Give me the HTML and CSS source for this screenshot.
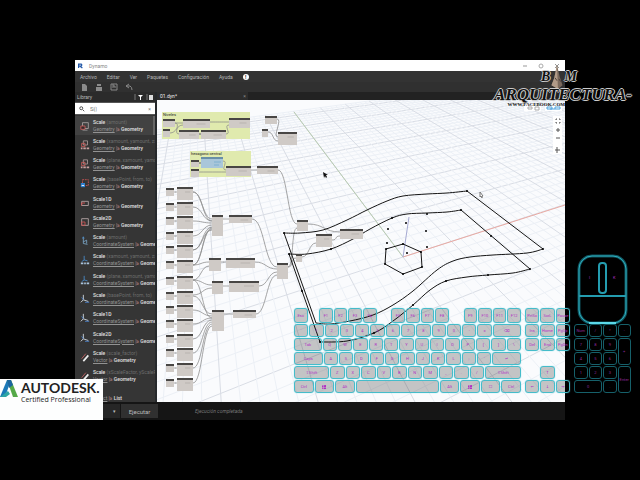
FILE: index.html
```html
<!DOCTYPE html>
<html lang="es">
<head>
<meta charset="utf-8">
<title>Dynamo</title>
<link rel="stylesheet" href="styles.css">
</head>
<body>
<svg class="defs" aria-hidden="true">
  <symbol id="i-box" viewBox="0 0 12 12"><path d="M3 2h7v7H3z" fill="none" stroke="#a9a3a3"/><path d="M1 6h5v4H1z" fill="#352c2c" stroke="#cf5f5b"/><path d="M3 11h6" stroke="#999"/></symbol>
  <symbol id="i-xyz" viewBox="0 0 12 12"><path d="M4 1h5v5H4z" fill="none" stroke="#a99"/><path d="M2 4h4v4H2z" fill="none" stroke="#cf5f5b"/><path d="M1 10h2M4 10h3M8 10h3" stroke="#c8a0a0" stroke-width="2"/></symbol>
  <symbol id="i-base" viewBox="0 0 12 12"><path d="M3 2h7v7H3z" fill="none" stroke="#c55" stroke-dasharray="2 1"/><path d="M1 6h5v5H1z" fill="#2f7fce"/><path d="M2 9h3" stroke="#fff"/></symbol>
  <symbol id="i-1d" viewBox="0 0 12 12"><path d="M2 4h8v5H2z" fill="none" stroke="#b9aaaa"/><path d="M2 9V6h4" fill="none" stroke="#d55"/></symbol>
  <symbol id="i-2d" viewBox="0 0 12 12"><path d="M2 2h8v8H2z" fill="none" stroke="#b9aaaa"/><path d="M2 10V6h4v4z" fill="none" stroke="#c55"/></symbol>
  <symbol id="i-cs" viewBox="0 0 12 12"><path d="M4 1v8l5 1M4 7l4-2v4" fill="none" stroke="#7ba7c9"/><path d="M3 3l1-2 1 2" fill="none" stroke="#4a8dcc"/></symbol>
  <symbol id="i-csx" viewBox="0 0 12 12"><path d="M5 1v5l4 1M5 6L2 8" fill="none" stroke="#4a8dcc"/><path d="M1 10h3M5 10h2M8 10h3" stroke="#a9c3dc" stroke-width="2"/></symbol>
  <symbol id="i-csb" viewBox="0 0 12 12"><path d="M4 1v6l6 2M4 7l-3 3" fill="none" stroke="#dfe5ea"/><path d="M2 4l2 3M6 10h5" stroke="#4a83d0"/></symbol>
  <symbol id="i-vec" viewBox="0 0 12 12"><path d="M2 8l5-6" stroke="#c66"/><path d="M4 11l6-7" stroke="#eee" stroke-width="2"/></symbol>
  <symbol id="i-win" viewBox="0 0 8 8"><path d="M0 1l3-.5V4H0zM4 .4L8 0v4H4zM0 5h3v3L0 7.500zM4 5h4v3H4z" fill="#b22fc4"/></symbol>
</svg>

<main class="app">
  <header class="title">
    <svg viewBox="0 0 8 8"><path d="M1 7V1h4q2 1 0 3H3l4 3" fill="none" stroke="#2459a8" stroke-width="2"/></svg>
    <span>Dynamo</span>
    <svg class="winctl" viewBox="0 0 40 8"><path d="M1 4h4M33 2l4 4M37 2l-4 4" stroke="#999"/><circle cx="19" cy="4" r="2" fill="none" stroke="#aaa"/></svg>
  </header>
  <nav class="menu">
    <a href="#">Archivo</a><a href="#">Editar</a><a href="#">Ver</a><a href="#">Paquetes</a><a href="#">Configuración</a><a href="#">Ayuda</a><b class="alert">!</b>
  </nav>
  <div class="tools">
    <button aria-label="Nuevo"><svg viewBox="0 0 8 8"><path d="M2 1h3l2 2v5H2z" fill="#8b8b8b"/></svg></button>
    <button aria-label="Abrir"><svg viewBox="0 0 8 8"><path d="M1 4h6v4H1zM2 1h4v2H2z" fill="#8b8b8b"/></svg></button>
    <button aria-label="Guardar"><svg viewBox="0 0 8 8"><path d="M1 1h6v6H1zM2 4h4M3 1v2h2" fill="none" stroke="#888"/></svg></button>
    <button aria-label="Deshacer"><svg viewBox="0 0 8 8"><path d="M4 1L1 3l3 2M1 3h4q2 1 2 4" fill="none" stroke="#888"/></svg></button>
  </div>
  <div class="work">
    <aside class="library">
      <div class="lib-head"><span>Library</span><svg viewBox="0 0 20 8"><path d="M2 1v6M14 1v6" stroke="#777"/><path d="M5 2h5L8 4v3H7V4z" fill="#fff"/><path d="M16 2h4v5h-4z" fill="#ddd"/></svg></div>
      <label class="search">
        <svg viewBox="0 0 8 8"><circle cx="3" cy="3" r="2" fill="none" stroke="#222"/><path d="M5 5l2 2" stroke="#222"/></svg>
        <input type="text" value="S(|" aria-label="Buscar"><i>×</i>
      </label>
      <div class="results"><ul id="results"></ul></div>
    </aside>
    <section class="workspace">
      <div class="tabs"><span class="tab">01.dyn*<i>×</i></span></div>
      <svg class="canvas" id="canvas" viewBox="157 100 408 302" preserveAspectRatio="xMinYMin slice"></svg>
    </section>
  </div>
  <footer class="status"><button class="mode" aria-label="Modo">▾</button><button class="run">Ejecutar</button><em>Ejecución completada</em></footer>
</main>

<div class="badge">
  <svg viewBox="0 0 18 20"><path d="M0 18L7 1h4L5 18z" fill="#1b79b8"/><path d="M7 1h4l7 17h-5z" fill="#55a948"/><path d="M7 1h4l2 5-4 3z" fill="#1c659f"/><path d="M0 18l8-6 2 3-4 3z" fill="#2ea5a4"/></svg>
  <div><strong>AUTODESK.</strong><span>Certified Professional</span></div>
</div>

<div class="brand">
  <div class="initials"><span>B</span><svg viewBox="0 0 14 26"><path d="M7 0l3 13 3 9-5 4-7-4 3-8z" fill="#79685c"/><path d="M7 0l1 26-7-4 3-8z" fill="#b09a88"/><path d="M5 14l2 3M9 15l2 3" stroke="#493c35"/></svg><span>M</span></div>
  <div class="name">ARQUITECTURA-</div>
  <small>WWW.FACEBOOK.COM</small>
</div>

<div class="keyboard">
  <div class="block main" id="keys-main"></div>
  <div class="block nav" id="keys-nav"></div>
  <div class="block pad" id="keys-pad"></div>
</div>
<svg class="mouse" viewBox="0 0 52 72"><rect x="2" y="2" width="47" height="67" rx="13" fill="none" stroke="#0f5560" stroke-width="3"/><rect x="2" y="2" width="47" height="67" rx="13" fill="none" stroke="#2fb0c0"/><path d="M2 42h47" stroke="#249caf" stroke-width="2"/><rect x="22" y="9" width="7" height="30" rx="3" fill="#000" stroke="#249caf" stroke-width="2"/><path d="M12 69h27" stroke="#5bd8e8" stroke-width="2"/><text x="12" y="25">I</text><text x="36" y="25">K</text></svg>
<script src="main.js"></script>
</body>
</html>
```
FILE: styles.css
```css
* { box-sizing: border-box; }
body { margin: 0; min-height: 100vh; padding: 60px 75px; background: #000; display: flex; position: relative; overflow: hidden; font-family: Roboto, "Noto Sans", sans-serif; font-size: 5px; }
button { font: inherit; color: inherit; background: none; border: 0; padding: 0; }
a { color: inherit; text-decoration: none; }
ul { list-style: none; margin: 0; padding: 0; }
i { font-style: normal; }
.defs { position: absolute; width: 0; height: 0; }
.app { flex: 1; min-width: 0; display: flex; flex-direction: column; background: #333; color: #b8b8b8; }
.title { height: 11px; background: #fff; color: #888; display: flex; align-items: center; gap: 6px; padding: 0 3px; }
.title svg { width: 5px; height: 6px; }
.title .winctl { width: 40px; height: 8px; margin-left: auto; }
.menu { height: 11px; display: flex; align-items: center; gap: 10px; padding-left: 5px; background: #333; }
.alert { width: 6px; height: 6px; border-radius: 50%; background: #fff; color: #222; text-align: center; line-height: 6px; }
.tools { height: 10px; display: flex; align-items: center; gap: 7px; padding-left: 5px; background: #303030; }
.tools button { width: 8px; height: 8px; display: flex; }
.tools svg { width: 8px; height: 8px; }
.work { flex: 1; min-height: 0; display: flex; }
.library { width: 82px; display: flex; flex-direction: column; border-right: 2px solid #25282b; background: #353535; }
.lib-head { height: 10px; display: flex; align-items: center; justify-content: space-between; padding: 0 2px; background: #2b2b2b; }
.lib-head svg { width: 20px; height: 8px; }
.search { height: 13px; display: flex; align-items: center; padding: 0 4px; gap: 5px; background: #fff; border: 1px solid #555; border-width: 1px 0; color: #777; }
.search svg { width: 6px; height: 6px; }
.search input { flex: 1; min-width: 0; border: 0; padding: 0; outline: 0; height: 9px; font: inherit; font-size: 6px; color: #777; text-decoration: underline; }
.results { flex: 1; min-height: 0; overflow: hidden; padding-top: 1px; }
.results ul { height: calc(100% + 3px); display: grid; grid-auto-rows: 1fr; }
.results li { display: flex; align-items: center; gap: 3px; padding-left: 5px; min-width: 0; min-height: 0; white-space: nowrap; }
.results li:first-child { background: #424242; border-right: 2px solid #666; }
.results li svg { width: 10px; height: 10px; flex: none; }
.results p { margin: 0; line-height: 7px; color: #e0e0e0; font-weight: 500; }
.results p span { color: #6c6c6c; font-weight: 400; }
.results p u { color: #929292; font-weight: 400; }
.results p i { color: #b88; }
.workspace { flex: 1; min-width: 0; display: flex; flex-direction: column; background: #fafbfd; }
.tabs { height: 8px; background: #222; display: flex; }
.tab { width: 91px; display: flex; justify-content: space-between; align-items: center; padding: 0 2px 0 3px; background: #2d2d2d; color: #eee; }
.tab i { color: #888; }
.canvas { width: 100%; flex: 1; min-height: 0; display: block; }
.canvas text { font: 4px Roboto, sans-serif; fill: #222; }
.grid { fill: none; stroke: #ecf0f6; stroke-width: 1; }
.grid.major { stroke: #d9dde5; }
.wire { fill: none; stroke: #888; stroke-width: 1; opacity: .75; }
.curve { fill: none; stroke: #151515; stroke-width: 1; }
.node { fill: #cfcac6; }
.head { fill: #484644; }
.line { fill: none; stroke: #b8b3af; stroke-width: 1; }
.status { height: 18px; display: flex; align-items: center; background: #151515; color: #bbb; }
.status .mode { width: 45px; height: 14px; text-align: right; padding-right: 4px; background: #262626; }
.status .run { width: 37px; height: 14px; background: #303030; margin-left: 1px; font-size: 6px; color: #bbb; }
.status em { margin-left: 37px; color: #777; }
.badge { position: absolute; left: 0; top: 379px; width: 103px; height: 41px; background: #fdfefe; color: #222; display: flex; align-items: flex-start; gap: 3px; }
.badge > svg { width: 18px; height: 20px; }
.badge div { display: flex; flex-direction: column; padding-top: 2px; }
.badge strong { font: 700 14px/14px Lato, sans-serif; }
.badge span { font: 7px/10px "Open Sans", sans-serif; }
.brand { position: absolute; right: 3px; top: 66px; width: 148px; text-align: center; color: #111; font-family: "Liberation Serif", serif; font-style: italic; font-weight: 700; }
.initials, .name { text-shadow: 1px 0 #ccc, -1px 0 #ccc, 0 1px #ccc, 0 -1px #ccc; }
.initials { height: 22px; display: flex; justify-content: center; align-items: center; font-size: 14px; padding-right: 8px; }
.initials svg { width: 14px; height: 24px; }
.name { font-size: 17px; line-height: 14px; white-space: nowrap; }
.brand small { display: block; width: 76px; text-align: right; font-size: 5px; line-height: 6px; font-style: normal; }
.keyboard { position: absolute; left: 294px; top: 308px; display: flex; gap: 4px; color: #b22fc4; font-size: 4px; }
.block { display: grid; gap: 1px; grid-template-rows: 15px repeat(5, 13px); height: 86px; }
.main { width: 227px; }
.row { display: flex; gap: 1px; min-width: 0; }
.nav { width: 45px; grid-template-columns: repeat(3, 1fr); }
.pad { width: 57px; grid-template-columns: repeat(4, 1fr); }
.key { min-width: 0; min-height: 0; border: 1px solid #45bcca; border-radius: 3px; background: rgba(0, 0, 0, .22); box-shadow: 0 0 1px #52d5e2; display: flex; align-items: center; justify-content: center; line-height: 5px; font-family: Roboto, "DejaVu Sans", sans-serif; }
.key svg { width: 4px; height: 4px; }
.pad .key { border-color: #16606a; box-shadow: none; color: #8f2a9c; }
.gap { visibility: hidden; }
.mouse { position: absolute; left: 577px; top: 254px; width: 52px; height: 72px; }
.mouse text { font: 4px Roboto, sans-serif; fill: #b22fc4; }
```
FILE: main.js
```js
// Search results: icon, name, parameters, source type, result type
const results = [
  ['box', 'Scale', '(amount)', 'Geometry', 'Geometry'],
  ['xyz', 'Scale', '(xamount, yamount, zam', 'Geometry', 'Geometry'],
  ['xyz', 'Scale', '(plane, xamount, yamou', 'Geometry', 'Geometry'],
  ['base', 'Scale', '(basePoint, from, to)', 'Geometry', 'Geometry'],
  ['1d', 'Scale1D', '', 'Geometry', 'Geometry'],
  ['2d', 'Scale2D', '', 'Geometry', 'Geometry'],
  ['cs', 'Scale', '(amount)', 'CoordinateSystem', 'Geome'],
  ['csx', 'Scale', '(xamount, yamount, zam', 'CoordinateSystem', 'Geome'],
  ['csx', 'Scale', '(plane, xamount, yamou', 'CoordinateSystem', 'Geome'],
  ['csb', 'Scale', '(basePoint, from, to)', 'CoordinateSystem', 'Geome'],
  ['csb', 'Scale1D', '', 'CoordinateSystem', 'Geome'],
  ['csb', 'Scale2D', '', 'CoordinateSystem', 'Geome'],
  ['vec', 'Scale', '(scale_factor)', 'Vector', 'Geometry'],
  ['vec', 'Scale', '(xScaleFactor, yScaleFac', 'Vector', 'Geometry'],
  ['vec', 'List', '', 'Object', 'List']
];
document.getElementById('results').innerHTML = results.map(([icon, name, args, from, to]) =>
  `<li><svg><use href="#i-${icon}"/></svg><div><p>${name} <span>${args}</span></p><p><u>${from}</u> <i>|≥</i> ${to}</p></div></li>`).join('');

// Ground grid in perspective
const origin = [403, 257], vpU = [1255, -20], vpV = [195, -20];
const stepU = 0.012, stepV = 0.03, far = 37;
function ground(u, v) {
  const a = u * stepU, b = v * stepV, d = 1 + a + b;
  return [0, 1].map(k => ((origin[k] + a * vpU[k] + b * vpV[k]) / d).toFixed(1)).join(' ');
}
let art = '';
for (let v = -24; v <= far; v++) {
  const u0 = (-0.75 - v * stepV) / stepU;
  art += `<path class="grid${v % 5 ? '' : ' major'}" d="M${ground(u0, v)}L${ground(140, v)}"/>`;
}
for (let u = -110; u <= 110; u++) {
  const v0 = (-0.75 - u * stepU) / stepV;
  if (v0 < far) art += `<path class="grid${u % 5 ? '' : ' major'}" d="M${ground(u, v0)}L${ground(u, far)}"/>`;
}
art += '<path d="M403 257L565 205" stroke="#e9a9a2"/><path d="M403 257L294 112" stroke="#b8cbb0"/><path d="M403 257L409 217" stroke="#a5a9d2"/>';
art += '<path d="M162 112h88v27h-88zM190 151h61v26h-61z" fill="#e0eaae"/><text x="163" y="116">Niveles</text><text x="191" y="155">hexagono central</text>';

// Wires between nodes
function wire(x1, y1, x2, y2) {
  const m = Math.max(6, (x2 - x1) / 2);
  art += `<path class="wire" d="M${x1} ${y1}C${x1 + m} ${y1} ${x2 - m} ${y2} ${x2} ${y2}"/>`;
}
const rows = [187, 202, 216, 231, 245, 260, 276, 291, 305, 319, 334, 348, 363, 378];
rows.forEach((y, i) => {
  wire(173, y + 5, 178, y + 5);
  if (i < 6) wire(193, y + 5, 212, 219 + i * 2);
  if (i > 6) wire(193, y + 5, 212, 314 + (i - 7) * 2);
});
[[193,192,212,221],[193,250,212,230],[193,265,209,262],[193,280,209,266],[193,265,212,228],[193,280,212,285],[193,295,212,288],[193,280,212,318],
 [223,219,229,219],[221,262,226,262],[223,286,229,286],[224,314,233,314],[252,219,277,267],[255,262,277,269],[259,286,277,272],[256,314,277,275],
 [175,123,183,123],[170,133,183,125],[175,123,179,134],[199,134,201,134],[210,122,229,122],[226,134,229,125],
 [199,163,201,163],[199,172,226,172],[223,161,226,170],[251,170,257,170],[278,170,297,224],[277,119,278,137],[268,132,278,141],
 [288,267,297,228],[288,267,296,258],[308,224,340,232],[302,257,316,243],[332,240,340,236]].forEach(w => wire(...w));

// Nodes: x, y, width, height
const nodes = [[163,119,12,8],[163,129,7,8],[183,119,27,9],[179,130,20,9],[201,130,25,9],[229,118,21,10],[191,160,8,7],[191,169,8,8],
 [226,166,25,10],[257,166,21,8],[265,116,12,8],[262,129,6,8],[278,132,19,13],[212,215,11,21],[209,258,12,13],[212,281,11,13],[212,310,12,21],
 [229,215,23,8],[226,258,29,10],[229,281,30,11],[233,310,23,8],[277,263,11,16],[297,220,11,11],[316,234,16,13],[340,229,23,10],[296,254,6,8]];
rows.forEach(y => nodes.push([166, y + 1, 8, 8], [177, y, 16, 13]));

// Smooth curve through a list of points
function spline(p) {
  let d = `M${p[0]}`;
  for (let i = 0; i < p.length - 1; i++) {
    const a = p[i - 1] || p[i], b = p[i], c = p[i + 1], e = p[i + 2] || c;
    d += `C${b[0] + (c[0] - a[0]) / 6} ${b[1] + (c[1] - a[1]) / 6} ${c[0] - (e[0] - b[0]) / 6} ${c[1] - (e[1] - b[1]) / 6} ${c}`;
  }
  art += `<path class="curve" d="${d}"/>`;
}
spline([[284,233],[300,233],[323,230],[347,220],[367,210],[387,201],[403,196],[427,194],[447,193],[467,191]]);
spline([[543,249],[527,253],[493,255],[470,257],[453,261],[437,270],[413,291],[393,305],[373,315],[350,321],[330,324],[316,323]]);
spline([[289,254],[307,254],[331,249],[353,239],[370,229],[392,218],[407,214],[427,213],[447,212],[461,210]]);
spline([[530,269],[513,273],[488,275],[467,277],[446,281],[430,290],[413,305],[393,321],[374,333],[347,341],[320,342]]);
art += '<path class="curve" d="M467 191L543 249M461 210L530 269M284 233L316 323M289 254L320 342M403 244L421 252L422 267L403 274L385 264L386 249Z"/>';
nodes.forEach(([x, y, w, h]) => {
  art += `<rect class="node" x="${x}" y="${y}" width="${w}" height="${h}"/><rect class="head" x="${x}" y="${y}" width="${w}" height="2"/>`;
  if (w > 12) art += `<path class="line" d="M${x + w / 2} ${y + 5}h${w / 3}"/>`;
});
art += '<rect x="201" y="157" width="22" height="11" fill="#a9c6da"/><rect x="201" y="157" width="22" height="2" fill="#6a8fa8"/><path d="M214 162h7M214 165h5" stroke="#7fb0d0"/>';
[[284,233],[289,254],[302,291],[320,342],[331,249],[392,218],[427,214],[461,210],[467,191],[491,236],[543,249],[530,269],[488,275],[446,281],[413,305],[374,333],
 [403,244],[421,252],[422,267],[403,274],[385,264],[386,249],[406,223],[388,229],[426,231],[387,243],[427,247],[407,253]].forEach(([x, y]) => {
  art += `<circle cx="${x}" cy="${y}" r="1"/>`;
});
art += '<path d="M323 172l1 6 1-2 1 2 1-1-1-2h2z" fill="#111"/><path d="M480 192v5l1-1 1 2v-2h1z" fill="#fff" stroke="#777"/>';
art += '<path d="M553 116h9v31h-9zM553 146h9v8h-9z" fill="#fff"/><path d="M556 120v-1h1M559 119h1v1M560 122v1h-1M557 123h-1v-1M556 130h4M558 128v4M556 138h4M555 150h5M557 147v6" fill="none" stroke="#555"/><path d="M524 105h17v6h-17zM545 105h17v6h-17z" fill="#fff"/><path d="M528 107h4v2h-4zM535 107h4v3h-4z" fill="none" stroke="#aaa"/><path d="M547 107h5v2h-5zM555 107h5v2h-5zM550 109h5" fill="none" stroke="#4ba0dc"/>';
document.getElementById('canvas').innerHTML = art;

// Keyboard: "label:width" in pixels, "_" is an empty space
const key = (label, style = '') => {
  const face = label === 'WIN' ? '<svg><use href="#i-win"/></svg>' : label;
  return `<kbd class="key${label === '_' ? ' gap' : ''}" style="${style}">${face}</kbd>`;
};
const board = [
  'Esc:14 _:9 F1:14 F2:14 F3:14 F4:14 _:13 F5:14 F6:14 F7:14 F8:14 _:13 F9:14 F10:14 F11:14 F12:14',
  '`:14 1:14 2:14 3:14 4:14 5:14 6:14 7:14 8:14 9:14 0:14 -:14 =:14 ⌫:30',
  'Tab:29 Q:14 W:14 E:14 R:14 T:14 Y:14 U:14 I:14 O:14 P:14 [:14 ]:14 \\:14',
  'Caps:30 A:14 S:14 D:14 F:14 G:14 H:14 J:14 K:14 L:14 ;:14 \':14 ↵:30',
  '⇧Shift:37 Z:14 X:14 C:14 V:14 B:14 N:14 M:14 ,:14 .:14 /:14 ⇧Shift:38',
  'Ctrl:19 WIN:19 Alt:19 \u00a0:88 Alt:19 WIN:19 ☐:19 Ctrl:19'
];
document.getElementById('keys-main').innerHTML = board.map(row => '<div class="row">' + row.split(' ').map(k => {
  const cut = k.lastIndexOf(':');
  return key(k.slice(0, cut), `flex:${k.slice(cut + 1)} 1 0`);
}).join('') + '</div>').join('');
document.getElementById('keys-nav').innerHTML =
  'PrtSc ScrL Pause Ins Home PgUp Del End PgDn _ _ _ _ ↑ _ ← ↓ →'.split(' ').map(k => key(k)).join('');
document.getElementById('keys-pad').innerHTML = [
  ['Num', 2, 1], ['/', 2, 2], ['*', 2, 3], ['-', 2, 4], ['7', 3, 1], ['8', 3, 2], ['9', 3, 3], ['+', 3, 4, 2],
  ['4', 4, 1], ['5', 4, 2], ['6', 4, 3], ['1', 5, 1], ['2', 5, 2], ['3', 5, 3], ['Enter', 5, 4, 2], ['0', 6, 1, 1, 2], ['.', 6, 3]
].map(([label, r, c, rs = 1, cs = 1]) => key(label, `grid-area:${r}/${c}/span ${rs}/span ${cs}`)).join('');
```
